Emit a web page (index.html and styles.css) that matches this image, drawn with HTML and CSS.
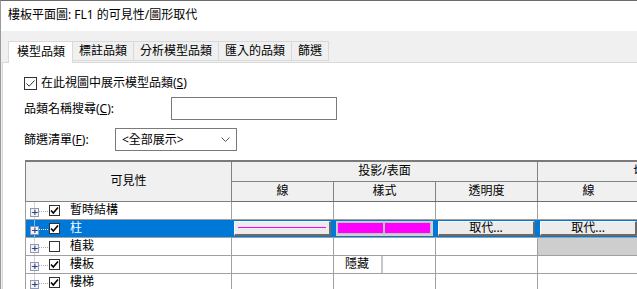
FILE: index.html
```html
<!DOCTYPE html>
<html lang="zh-Hant">
    <head>
        <meta charset="UTF-8" />
        <link rel="stylesheet" href="styles.css">
        <title>可見性/圖形取代</title>
    </head>
    <body>
        <div class="dialog">
            <header class="titlebar">樓板平面圖: FL1 的可見性/圖形取代</header>
            <div class="dialog-body">
                <nav class="tabs">
                    <span class="tab active">模型品類</span>
                    <span class="tab">標註品類</span>
                    <span class="tab">分析模型品類</span>
                    <span class="tab">匯入的品類</span>
                    <span class="tab">篩選</span>
                </nav>
                <section class="panel">
                    <div class="check-row">
                        <span class="cb cb-flat checked"></span>
                        <span>在此視圖中展示模型品類(<u>S</u>)</span>
                    </div>
                    <div class="field">
                        <span class="field-label search-label">品類名稱搜尋(<u>C</u>):</span>
                        <span class="input"></span>
                    </div>
                    <div class="field">
                        <span class="field-label filter-label">篩選清單(<u>F</u>):</span>
                        <span class="select">
                            <span>&lt;全部展示&gt;</span>
                            <svg width="9" height="6" viewBox="0 0 9 6"><polyline points="0.5,0.5 4.5,4.5 8.5,0.5" fill="none" stroke="#555" stroke-width="1"/></svg>
                        </span>
                    </div>

                    <table class="grid">
                        <colgroup>
                            <col class="c-vis">
                            <col class="c-std">
                            <col class="c-std">
                            <col class="c-std">
                            <col class="c-std">
                            <col class="c-std">
                        </colgroup>
                        <thead>
                            <tr class="head-1">
                                <th rowspan="2">可見性</th>
                                <th colspan="3">投影/表面</th>
                                <th colspan="2">切</th>
                            </tr>
                            <tr class="head-2">
                                <th>線</th>
                                <th>樣式</th>
                                <th>透明度</th>
                                <th>線</th>
                                <th>樣式</th>
                            </tr>
                        </thead>
                        <tbody>
                            <tr>
                                <td class="tree"><div class="node"><span class="exp">+</span><span class="dots"></span><span class="cb checked"></span><span class="name">暫時結構</span></div></td>
                                <td></td><td></td><td></td><td></td><td></td>
                            </tr>
                            <tr class="selected">
                                <td class="tree"><div class="node"><span class="exp">+</span><span class="dots solid"></span><span class="cb checked"></span><span class="name">柱</span></div></td>
                                <td><span class="ctl line-ctl"><span class="magenta-line"></span></span></td>
                                <td><span class="ctl pattern-ctl"><span class="swatch"></span><span class="swatch"></span></span></td>
                                <td><span class="ctl btn">取代...</span></td>
                                <td><span class="ctl btn">取代...</span></td>
                                <td></td>
                            </tr>
                            <tr>
                                <td class="tree"><div class="node"><span class="exp">+</span><span class="dots"></span><span class="cb"></span><span class="name">植栽</span></div></td>
                                <td></td><td></td><td></td><td class="hatch"></td><td class="hatch"></td>
                            </tr>
                            <tr>
                                <td class="tree"><div class="node"><span class="exp">+</span><span class="dots"></span><span class="cb checked"></span><span class="name">樓板</span></div></td>
                                <td></td>
                                <td><span class="split"><span class="split-left">隱藏</span></span></td>
                                <td></td><td></td><td></td>
                            </tr>
                            <tr>
                                <td class="tree"><div class="node"><span class="exp">+</span><span class="dots"></span><span class="cb checked"></span><span class="name">樓梯</span></div></td>
                                <td></td><td></td><td></td><td></td><td></td>
                            </tr>
                        </tbody>
                    </table>
                </section>
            </div>
        </div>
    </body>
</html>
```

FILE: styles.css
```css
* {
    margin: 0;
    padding: 0;
    box-sizing: border-box;
}
:root {
    --face: #f0f0f0;
    --grid: #a0a0a0;
    --head-line: #828282;
    --select: #0078d7;
    --magenta: #ff00ff;
    --font-fam: 'Noto Sans', 'Noto Sans CJK TC', sans-serif;
}
body {
    width: 637px;
    height: 289px;
    overflow: hidden;
    font-family: var(--font-fam);
    font-size: 12px;
    line-height: 16px;
    color: #000;
    background-color: var(--face);
}

.dialog {
    width: 637px;
    height: 289px;
    overflow: hidden;
    border-top: 1px solid #6b6b6b;
    border-left: 1px solid #9a9a9a;
}

/* ===== title ===== */
.titlebar {
    height: 30px;
    padding: 6px 0 0 7px;
    background-color: #fff;
}

/* ===== tabs ===== */
.dialog-body {
    padding-left: 1px;
}
.tabs {
    display: flex;
    align-items: flex-end;
    padding: 9px 0 0 6px;
    height: 31px;
}
.tab {
    height: 20px;
    padding: 1px 6px 0;
    border: 1px solid #d9d9d9;
    border-left: none;
    background-color: var(--face);
    margin-bottom: 1px;
}
.tab.active {
    height: 22px;
    margin-bottom: -1px;
    padding: 2px 7px 0 8px;
    border-left: 1px solid #d9d9d9;
    border-bottom: none;
    background-color: #fff;
    position: relative;
    z-index: 1;
}

/* ===== panel ===== */
.panel {
    height: 230px;
    padding: 13px 0 0 21px;
    background-color: #fff;
    border-top: 1px solid #d9d9d9;
    border-left: 1px solid #d9d9d9;
}

.check-row {
    display: flex;
    align-items: center;
    gap: 4px;
    height: 14px;
}

.field {
    display: flex;
    align-items: center;
    margin-top: 7px;
}
.field + .field {
    margin-top: 8px;
}
.field-label {
    flex: none;
}
.search-label {
    width: 147px;
}
.filter-label {
    width: 91px;
}
.input {
    width: 166px;
    height: 23px;
    border: 1px solid #7a7a7a;
    background-color: #fff;
}
.select {
    display: flex;
    align-items: center;
    justify-content: space-between;
    width: 122px;
    height: 23px;
    padding: 0 6px 0 6px;
    border: 1px solid #7a7a7a;
    background-color: #fff;
}

/* checkbox */
.cb {
    flex: none;
    width: 11px;
    height: 11px;
    border: 1px solid #333;
    background-color: #fff;
}
.cb-flat {
    width: 13px;
    height: 13px;
}
.cb.checked {
    background-image: url("data:image/svg+xml,%3Csvg xmlns='http://www.w3.org/2000/svg' width='9' height='9' viewBox='0 0 9 9'%3E%3Cpolyline points='1,4.5 3.3,7 8,1.5' fill='none' stroke='%23000' stroke-width='1.6'/%3E%3C/svg%3E");
    background-repeat: no-repeat;
    background-position: center;
}
.cb-flat.checked {
    background-image: url("data:image/svg+xml,%3Csvg xmlns='http://www.w3.org/2000/svg' width='11' height='11' viewBox='0 0 11 11'%3E%3Cpolyline points='1.5,5.5 4.2,8.2 9.5,2.5' fill='none' stroke='%23333' stroke-width='1'/%3E%3C/svg%3E");
}

/* ===== grid ===== */
.grid {
    margin: 9px 0 0 1px;
    border-collapse: collapse;
    table-layout: fixed;
    width: 716px;
    border-top: 2px solid #7a7a7a;
    border-left: 1px solid #7a7a7a;
}
.c-vis {
    width: 206px;
}
.c-std {
    width: 102px;
}
.grid th {
    font-weight: normal;
    background-color: var(--face);
    border: 1px solid var(--head-line);
    border-top: none;
    height: 20px;
    padding: 0;
    line-height: 18px;
    white-space: nowrap;
}
.head-2 th {
    border-bottom: 1px solid #6e6e6e;
}
.grid td {
    height: 18px;
    padding: 0;
    border: 1px solid var(--grid);
    border-top: none;
    background-color: #fff;
    vertical-align: middle;
}

/* tree column */
.grid td.tree {
    padding-left: 4px;
    background-image: linear-gradient(#a8a8a8 50%, transparent 50%);
    background-size: 1px 2px;
    background-position: 8px 0;
    background-repeat: repeat-y;
}
.node {
    display: flex;
    align-items: center;
    height: 17px;
    white-space: nowrap;
}
.exp {
    flex: none;
    width: 9px;
    height: 9px;
    margin-top: 4px;
    border: 1px solid #8f9bb3;
    background-color: #f4f4f4;
    color: #2b3c8c;
    font-size: 9px;
    line-height: 6px;
    text-align: center;
    font-weight: bold;
    font-family: 'DejaVu Sans', sans-serif;
}
.dots {
    flex: none;
    width: 10px;
    height: 1px;
    margin-top: 3px;
    background-image: linear-gradient(90deg, #a8a8a8 50%, transparent 50%);
    background-size: 2px 1px;
}
.dots.solid {
    background-image: linear-gradient(90deg, #fff 50%, transparent 50%);
}
.name {
    margin-left: 10px;
}

/* selected row */
.grid tr.selected td {
    background-color: var(--select);
    border-color: var(--select);
    border-bottom-color: var(--grid);
    padding: 1px 2px;
}
.grid tr.selected td:first-child {
    border-left-color: var(--grid);
}
.grid tr.selected td.tree {
    padding: 0 0 0 4px;
    background-image: linear-gradient(#fff 50%, transparent 50%);
    color: #fff;
}
.ctl {
    display: flex;
    align-items: center;
    justify-content: center;
    height: 15px;
    background-color: #ececec;
    border: 1px solid #fafafa;
    border-right: 2px solid #6b6b6b;
    border-bottom: 2px solid #6b6b6b;
}
.line-ctl {
    padding: 0 3px;
}
.magenta-line {
    display: block;
    width: 100%;
    height: 1px;
    background-color: var(--magenta);
}
.pattern-ctl {
    gap: 2px;
    padding: 1px 1px;
    background-color: #c0c0c0;
    border-color: #d0d0d0;
}
.swatch {
    flex: 1;
    height: 100%;
    background-color: var(--magenta);
}
.btn {
    line-height: 13px;
}

.grid td.hatch {
    background-color: #fff;
    background-image: repeating-conic-gradient(#9c9c9c 0 25%, #fff 0 50%);
    background-size: 2px 2px;
}

.split {
    display: flex;
    height: 17px;
}
.split-left {
    width: 49px;
    padding-left: 11px;
    border-right: 2px solid #c8c8c8;
}
```
